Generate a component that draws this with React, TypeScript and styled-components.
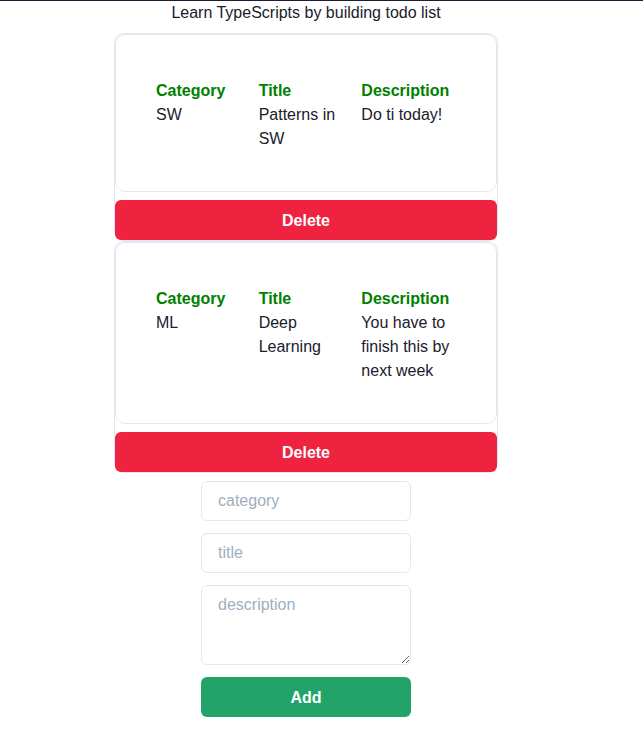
import React, { useState } from "react";
import styled, { createGlobalStyle } from "styled-components";

const GlobalStyle = createGlobalStyle`
  html, body {
    margin: 0;
    padding: 0;
    background: #ffffff;
  }
  body {
    border-top: 1px solid #1c1c38;
    font-family: "Liberation Sans", Arial, sans-serif;
    color: #1a202c;
  }
  * { box-sizing: border-box; }
`;

const Page = styled.div`
  width: 612px;
  display: flex;
  flex-direction: column;
  align-items: center;
`;

const Heading = styled.div`
  font-size: 16px;
  line-height: 23px;
  height: 23px;
  margin-bottom: 9px;
  color: #1a202c;
`;

const List = styled.div`
  display: flex;
  flex-direction: column;
  width: 384px;
`;

const Item = styled.div`
  border: 1px solid #e2e8f0;
  border-radius: 10px;
  display: flex;
  flex-direction: column;
`;

const Card = styled.div`
  border: 1px solid #e2e8f0;
  border-radius: 10px;
  padding: 44px 40px 40px;
`;

const Grid = styled.div`
  display: grid;
  grid-template-columns: repeat(3, 1fr);
  column-gap: 8px;
`;

const Column = styled.div`
  display: flex;
  flex-direction: column;
  font-size: 16px;
  line-height: 24px;
`;

const Label = styled.div`
  font-weight: 700;
  color: #008000;
`;

const Value = styled.div`
  color: #1a202c;
`;

const ActionButton = styled.button<{ $tone: "red" | "green" }>`
  height: 40px;
  border: none;
  border-radius: 6px;
  padding: 2px 0 0;
  background: ${(p) => (p.$tone === "red" ? "#ef233f" : "#22a36a")};
  color: #ffffff;
  font-family: "Liberation Sans", Arial, sans-serif;
  font-size: 16px;
  font-weight: 700;
  cursor: pointer;
  width: 100%;
`;

const DeleteButton = styled(ActionButton)`
  margin-top: 8px;
`;

const Form = styled.form`
  margin-top: 8px;
  width: 210px;
  display: flex;
  flex-direction: column;
  gap: 12px;
`;

const fieldStyles = `
  width: 100%;
  border: 1px solid #e2e8f0;
  border-radius: 6px;
  padding: 0 16px;
  font-family: "Liberation Sans", Arial, sans-serif;
  font-size: 16px;
  color: #1a202c;
  background: #ffffff;
  outline: none;
  &::placeholder { color: #a0aec0; opacity: 1; }
`;

const Input = styled.input`
  ${fieldStyles}
  height: 40px;
`;

const TextArea = styled.textarea`
  ${fieldStyles}
  height: 80px;
  padding-top: 7px;
  padding-bottom: 8px;
  line-height: 24px;
  display: block;
`;

type Todo = { category: string; title: string; description: string };

const initial: Todo[] = [
  { category: "SW", title: "Patterns in SW", description: "Do ti today!" },
  {
    category: "ML",
    title: "Deep Learning",
    description: "You have to finish this by next week",
  },
];

export default function App() {
  const [todos, setTodos] = useState<Todo[]>(initial);
  const [form, setForm] = useState<Todo>({ category: "", title: "", description: "" });

  const remove = (i: number) => setTodos((t) => t.filter((_, j) => j !== i));
  const add = (e: React.FormEvent) => {
    e.preventDefault();
    if (!form.category && !form.title && !form.description) return;
    setTodos((t) => [...t, form]);
    setForm({ category: "", title: "", description: "" });
  };

  return (
    <>
      <GlobalStyle />
      <Page>
        <Heading>Learn TypeScripts by building todo list</Heading>
        <List>
          {todos.map((t, i) => (
            <Item key={i}>
              <Card>
                <Grid>
                  <Column>
                    <Label>Category</Label>
                    <Value>{t.category}</Value>
                  </Column>
                  <Column>
                    <Label>Title</Label>
                    <Value>{t.title}</Value>
                  </Column>
                  <Column>
                    <Label>Description</Label>
                    <Value>{t.description}</Value>
                  </Column>
                </Grid>
              </Card>
              <DeleteButton $tone="red" type="button" onClick={() => remove(i)}>
                Delete
              </DeleteButton>
            </Item>
          ))}
        </List>
        <Form onSubmit={add}>
          <Input
            placeholder="category"
            value={form.category}
            onChange={(e) => setForm({ ...form, category: e.target.value })}
          />
          <Input
            placeholder="title"
            value={form.title}
            onChange={(e) => setForm({ ...form, title: e.target.value })}
          />
          <TextArea
            placeholder="description"
            value={form.description}
            onChange={(e) => setForm({ ...form, description: e.target.value })}
          />
          <ActionButton $tone="green" type="submit">
            Add
          </ActionButton>
        </Form>
      </Page>
    </>
  );
}
